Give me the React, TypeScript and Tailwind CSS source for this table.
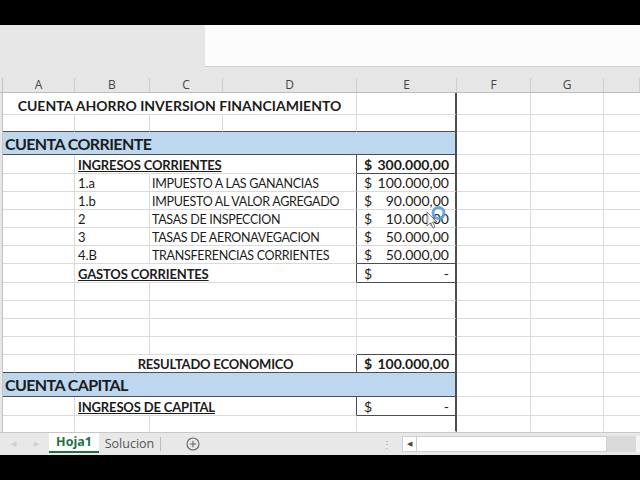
import React from 'react';

const GRID = 'grid grid-cols-[3px_72px_75px_73px_134px_100px_74px_73px_36px]';
const FONT = "font-['Lato','Liberation_Sans',sans-serif]";
const LIGHT_R = 'border-r-[#dadada]';
const LIGHT_B = 'border-b-[#dadada]';
const DARK_R = 'border-r-[#4d4d4d]';
const DARK_B = 'border-b-[#4d4d4d]';
// excel aligns text to the bottom of the cell
const BOTTOM = 'items-end pb-[1px] leading-none';

type CellProps = {
  span?: string;
  r?: string;
  b?: string;
  rw?: string;
  className?: string;
  children?: React.ReactNode;
};

const Cell: React.FC<CellProps> = ({ span = '', r = LIGHT_R, b = LIGHT_B, rw = 'border-r', className = 'items-center', children }) => (
  <div className={`${span} ${rw} border-b ${r} ${b} flex overflow-hidden whitespace-nowrap ${className}`}>
    {children}
  </div>
);

const RowHead = () => <div className="bg-[#e6e6e6] border-r border-[#c4c4c4]" />;

const Rest = () => (
  <>
    <Cell />
    <Cell />
    <Cell rw="border-r-0" />
  </>
);

const Money: React.FC<{ value: string; bold?: boolean; b?: string }> = ({ value, bold, b = LIGHT_B }) => (
  <Cell r={DARK_R} rw="border-r-2" b={b} className={`${BOTTOM} justify-between pl-[7px] pr-[6px] text-[14px] ${bold ? 'font-bold' : ''}`}>
    <span>$</span>
    <span>{value}</span>
  </Cell>
);

const items = [
  { code: '1.a', name: 'IMPUESTO A LAS GANANCIAS', value: '100.000,00' },
  { code: '1.b', name: 'IMPUESTO AL VALOR AGREGADO', value: '90.000,00' },
  { code: '2', name: 'TASAS DE INSPECCION', value: '10.000,00' },
  { code: '3', name: 'TASAS DE AERONAVEGACION', value: '50.000,00' },
  { code: '4.B', name: 'TRANSFERENCIAS CORRIENTES', value: '50.000,00' },
];

const columns = [
  { label: 'A', w: 'w-[72px]' },
  { label: 'B', w: 'w-[75px]' },
  { label: 'C', w: 'w-[73px]' },
  { label: 'D', w: 'w-[134px]' },
  { label: 'E', w: 'w-[100px]' },
  { label: 'F', w: 'w-[74px]' },
  { label: 'G', w: 'w-[73px]' },
  { label: '', w: 'w-[36px]' },
];

export default function App() {
  return (
    <div className={`relative w-[640px] h-[480px] overflow-hidden bg-black ${FONT} text-[#1c1c1c]`}>
      <div className="h-[25px] bg-black" />

      {/* formula bar area */}
      <div className="h-[42px] flex bg-[#e6e6e6]">
        <div className="w-[205px]" />
        <div className="flex-1 bg-[#fcfcfc] border-b border-[#d0d0d0]" />
      </div>
      <div className="h-[11px] bg-[#e6e6e6]" />

      {/* column headers */}
      <div className="h-[15px] flex bg-[#e6e6e6] border-b border-[#bdbdbd] font-['Open_Sans',sans-serif] text-[12px] text-[#444]">
        <div className="w-[3px] border-r border-[#c4c4c4]" />
        {columns.map((c, i) => (
          <div key={i} className={`${c.w} border-r border-[#cfcfcf] flex items-center justify-center leading-none`}>
            {c.label}
          </div>
        ))}
      </div>

      <div className="bg-white">
        {/* row 1 */}
        <div className={`${GRID} h-[22px]`}>
          <RowHead />
          <Cell span="col-span-4" className="items-center justify-center pt-[3px] font-bold text-[14px]">
            CUENTA AHORRO INVERSION FINANCIAMIENTO
          </Cell>
          <Cell r={DARK_R} rw="border-r-2" />
          <Rest />
        </div>

        {/* row 2 */}
        <div className={`${GRID} h-[17px]`}>
          <RowHead />
          <Cell b={DARK_B} />
          <Cell b={DARK_B} />
          <Cell b={DARK_B} />
          <Cell b={DARK_B} />
          <Cell b={DARK_B} r={DARK_R} rw="border-r-2" />
          <Rest />
        </div>

        {/* cuenta corriente */}
        <div className={`${GRID} h-[23px]`}>
          <RowHead />
          <Cell span="col-span-5" r={DARK_R} rw="border-r-2" b={DARK_B} className="items-center pt-[2px] bg-[#bdd7ee] pl-[2px] font-bold text-[16px] tracking-[-0.6px]">
            CUENTA CORRIENTE
          </Cell>
          <Rest />
        </div>

        {/* ingresos corrientes */}
        <div className={`${GRID} h-[19px]`}>
          <RowHead />
          <Cell />
          <Cell span="col-span-3" r={DARK_R} className={`${BOTTOM} pl-[3px] font-bold underline text-[13px] tracking-[-0.15px]`}>
            INGRESOS CORRIENTES
          </Cell>
          <Money value="300.000,00" bold b={DARK_B} />
          <Rest />
        </div>

        {items.map((it, i) => (
          <div key={it.code} className={`${GRID} h-[18px]`}>
            <RowHead />
            <Cell />
            <Cell className={`${BOTTOM} pl-[3px] text-[13px]`}>{it.code}</Cell>
            <Cell span="col-span-2" r={DARK_R} className={`${BOTTOM} pl-[2px] text-[12.5px] tracking-[-0.3px]`}>
              {it.name}
            </Cell>
            <Money value={it.value} b={i === items.length - 1 ? DARK_B : LIGHT_B} />
            <Rest />
          </div>
        ))}

        {/* gastos corrientes */}
        <div className={`${GRID} h-[19px]`}>
          <RowHead />
          <Cell />
          <Cell span="col-span-3" r={DARK_R} className={`${BOTTOM} pl-[3px] font-bold underline text-[13px] tracking-[-0.15px]`}>
            GASTOS CORRIENTES
          </Cell>
          <Money value="-" b={DARK_B} />
          <Rest />
        </div>

        {[0, 1, 2, 3].map((i) => (
          <div key={i} className={`${GRID} h-[18px]`}>
            <RowHead />
            <Cell />
            <Cell />
            <Cell span="col-span-2" />
            <Cell r={DARK_R} rw="border-r-2" b={i === 3 ? DARK_B : LIGHT_B} />
            <Rest />
          </div>
        ))}

        {/* resultado */}
        <div className={`${GRID} h-[18px]`}>
          <RowHead />
          <Cell b={DARK_B} />
          <Cell span="col-span-3" r={DARK_R} b={DARK_B} className={`${BOTTOM} justify-center font-bold text-[13px] tracking-[-0.2px]`}>
            RESULTADO ECONOMICO
          </Cell>
          <Money value="100.000,00" bold b={DARK_B} />
          <Rest />
        </div>

        {/* cuenta capital */}
        <div className={`${GRID} h-[24px]`}>
          <RowHead />
          <Cell span="col-span-5" r={DARK_R} rw="border-r-2" b={DARK_B} className="items-center pt-[1px] bg-[#bdd7ee] pl-[2px] font-bold text-[16px] tracking-[-0.6px]">
            CUENTA CAPITAL
          </Cell>
          <Rest />
        </div>

        <div className={`${GRID} h-[19px]`}>
          <RowHead />
          <Cell />
          <Cell span="col-span-3" r={DARK_R} className={`${BOTTOM} pl-[3px] font-bold underline text-[13px] tracking-[-0.15px]`}>
            INGRESOS DE CAPITAL
          </Cell>
          <Money value="-" b={DARK_B} />
          <Rest />
        </div>

        <div className={`${GRID} h-[16px]`}>
          <RowHead />
          <Cell b="border-b-transparent" />
          <Cell b="border-b-transparent" />
          <Cell span="col-span-2" b="border-b-transparent" />
          <Cell r={DARK_R} rw="border-r-2" b="border-b-transparent" />
          <Cell b="border-b-transparent" />
          <Cell b="border-b-transparent" />
          <Cell rw="border-r-0" b="border-b-transparent" />
        </div>
      </div>

      {/* sheet tabs */}
      <div className="h-[23px] flex items-stretch bg-[#e8e8e8] border-t border-[#c8c8c8] font-['Open_Sans',sans-serif] text-[12.5px]">
        <div className="w-[49px] flex items-center justify-center gap-[18px] text-[7px] text-[#cfcfcf]">
          <span>◀</span>
          <span>▶</span>
        </div>
        <div className="w-[50px] bg-white flex items-center justify-center font-bold text-[#1e7145] border-b-2 border-[#1e7145] mb-[2px]">
          Hoja1
        </div>
        <div className="w-[62px] flex items-center justify-center text-[#555] border-r border-[#bdbdbd] my-[4px]">
          Solucion
        </div>
        <div className="w-[64px] flex items-center justify-center">
          <svg width="14" height="14" viewBox="0 0 14 14" fill="none" stroke="#666" strokeWidth="1.1">
            <circle cx="7" cy="7" r="6" />
            <path d="M7 3.8v6.4M3.8 7h6.4" />
          </svg>
        </div>
        <div className="w-[177px] flex items-center justify-end pr-[10px] text-[#aaa] text-[10px] leading-none">⋮</div>
        <div className="w-[15px] my-[3px] bg-white border border-[#cfcfcf] flex items-center justify-center text-[7px] text-[#444]">◀</div>
        <div className="w-[190px] my-[3px] bg-white border-y border-r border-[#cfcfcf]" />
        <div className="w-[29px] my-[3px] bg-[#dadada]" />
        <div className="flex-1 my-[3px] bg-[#f4f4f4]" />
      </div>

      <div className="h-[25px] bg-black" />

      {/* busy cursor overlay */}
      <svg className="absolute left-[420px] top-[202px]" width="30" height="30" viewBox="0 0 30 30">
        <circle cx="18.5" cy="11" r="5.5" fill="none" stroke="#5a9de0" strokeWidth="3" opacity="0.9" />
        <path d="M7 10 L7 24 L10.5 20.8 L13 26 L15 25 L12.6 20 L17 20 Z" fill="white" stroke="#333" strokeWidth="0.8" opacity="0.8" />
      </svg>
    </div>
  );
}
